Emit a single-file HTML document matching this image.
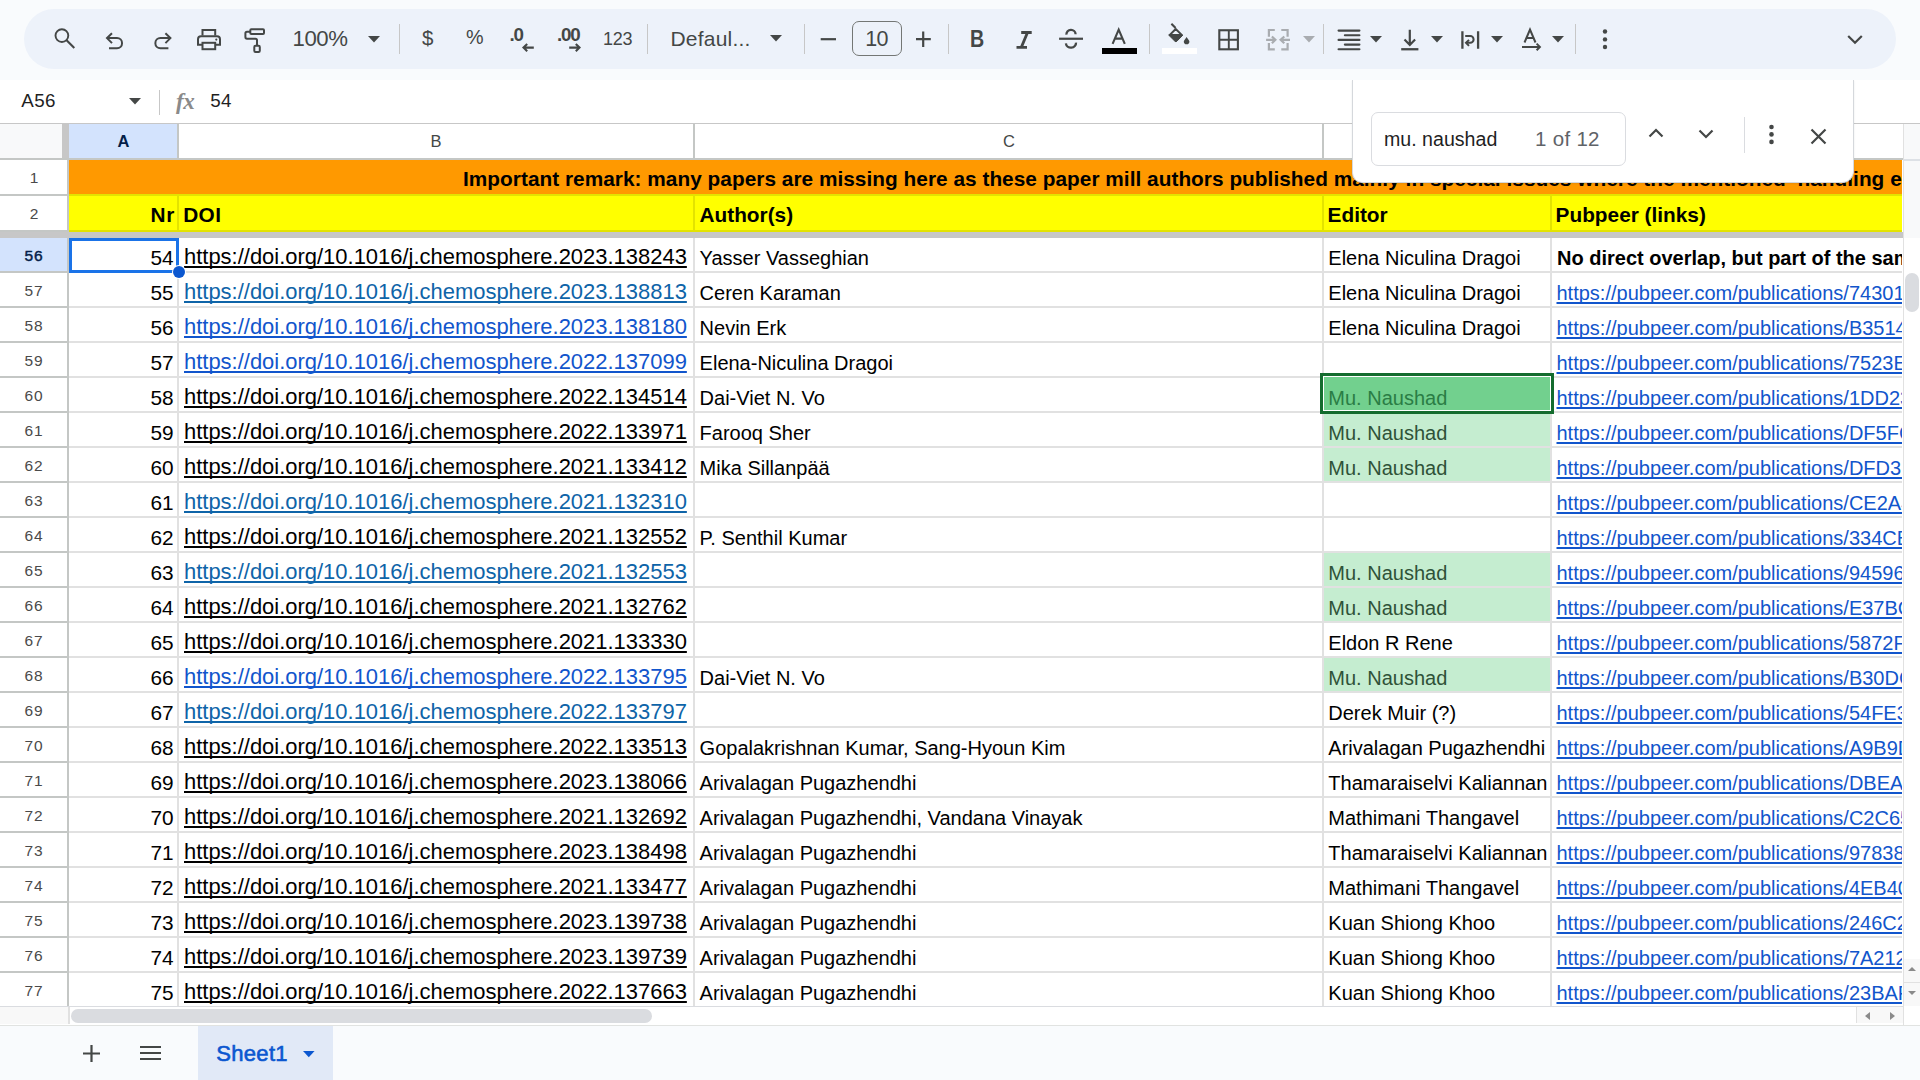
<!DOCTYPE html>
<html><head><meta charset="utf-8"><title>Sheet1 - Google Sheets</title>
<style>
html,body{margin:0;padding:0;}
body{width:1920px;height:1080px;overflow:hidden;position:relative;background:#f9fbfd;font-family:"Liberation Sans", sans-serif;}
.t{position:absolute;white-space:nowrap;}
.r{position:absolute;}
.clip{position:absolute;overflow:hidden;}
.ic{position:absolute;overflow:visible;}
.u{text-decoration:underline;text-decoration-thickness:2px;text-underline-offset:1.5px;text-decoration-skip-ink:none;}
</style></head><body>

<div class="r" style="left:24px;top:9px;width:1872px;height:60px;background:#edf2fa;border-radius:30px;"></div>
<svg class="ic" style="left:0;top:0" width="1920" height="80" viewBox="0 0 1920 80"><circle cx="61.9" cy="35.6" r="6.4" fill="none" stroke="#444746" stroke-width="1.9"/><path d="M66.6 40.3 L74.3 48" fill="none" stroke="#444746" stroke-width="2.1"/><path d="M112 33.2 L107 38.1 L112 43.1" fill="none" stroke="#444746" stroke-width="2"/><path d="M107.2 38.1 H117 A5.05 5.05 0 0 1 117 48.2 H109" fill="none" stroke="#444746" stroke-width="2"/><path d="M165.4 33.2 L170.4 38.1 L165.4 43.1" fill="none" stroke="#444746" stroke-width="2"/><path d="M170.2 38.1 H160.4 A5.05 5.05 0 0 0 160.4 48.2 H168.4" fill="none" stroke="#444746" stroke-width="2"/><path d="M202.5 35.4 V30.1 H215.2 V35.4" fill="none" stroke="#444746" stroke-width="2"/><path d="M202.5 44.8 H198 V39.2 A3 3 0 0 1 201 36.2 H217 A3 3 0 0 1 220 39.2 V44.8 H215.2" fill="none" stroke="#444746" stroke-width="2"/><rect x="202.5" y="42.8" width="12.7" height="6.4" fill="none" stroke="#444746" stroke-width="2"/><circle cx="216.3" cy="39.6" r="1.1" fill="#444746"/><rect x="250.3" y="29.2" width="13.7" height="4.9" rx="1" fill="none" stroke="#444746" stroke-width="2"/><path d="M250.3 31.7 H247 A1.6 1.6 0 0 0 245.4 33.3 V37.1 A1.6 1.6 0 0 0 247 38.7 H255.5 A1.5 1.5 0 0 1 257 40.2 V45" fill="none" stroke="#444746" stroke-width="2"/><rect x="254.3" y="45.8" width="5.5" height="6.2" rx="1.2" fill="none" stroke="#444746" stroke-width="2"/><path d="M533.8 47.6 H523.5 M527.2 44 L523.5 47.6 L527.2 51.2" fill="none" stroke="#444746" stroke-width="2.1"/><path d="M569.2 47.6 H579.5 M575.8 44 L579.5 47.6 L575.8 51.2" fill="none" stroke="#444746" stroke-width="2.1"/><path d="M820.7 39.2 H836" fill="none" stroke="#444746" stroke-width="2.2"/><path d="M916 39.2 H930.8 M923.2 31.4 V47" fill="none" stroke="#444746" stroke-width="2.2"/><path d="M1021.2 32.5 H1031.7 M1016.5 47.4 H1027 M1027.5 32.5 L1021.3 47.4" fill="none" stroke="#444746" stroke-width="2.8"/><path d="M1059.1 38.75 H1083" fill="none" stroke="#444746" stroke-width="2.2"/><path d="M1066.4 34.6 A4.6 4.6 0 0 1 1075.6 34.2" fill="none" stroke="#444746" stroke-width="2.3"/><path d="M1065.9 43.4 A5 4.6 0 0 0 1076 42.6" fill="none" stroke="#444746" stroke-width="2.3"/><path d="M1112.6 43.8 L1118.7 29.6 L1124.8 43.8 M1114.8 38.6 H1122.6" fill="none" stroke="#444746" stroke-width="2.1"/><path d="M1171.4 23.8 L1175.6 28" fill="none" stroke="#444746" stroke-width="2.1"/><path d="M1169.8 34.9 L1175.7 29 L1181.7 34.9 Z" fill="none" stroke="#444746" stroke-width="2" stroke-linejoin="round"/><path d="M1168.7 35.1 H1182.9 L1176.9 41.2 A1.4 1.4 0 0 1 1174.9 41.2 Z" fill="#444746" stroke="#444746" stroke-width="1" stroke-linejoin="round"/><path d="M1186.6 37 C1188 39 1189.4 40.6 1189.4 41.4 A2.8 2.8 0 0 1 1183.8 41.4 C1183.8 40.6 1185.2 39 1186.6 37 Z" fill="#444746"/><rect x="1219.3" y="30.25" width="18.6" height="19.05" fill="none" stroke="#444746" stroke-width="2.1"/><path d="M1228.8 30.25 V49.3 M1219.3 39.8 H1237.9" fill="none" stroke="#444746" stroke-width="1.9"/><path d="M1274.8 30 H1268.9 V36.7 M1268.9 43.1 V49.3 H1274.8 M1281.3 30 H1287.6 V36.7 M1287.6 43.1 V49.3 H1281.3" fill="none" stroke="#a9acb0" stroke-width="2.2"/><path d="M1266.1 39.8 H1275 M1271.9 36.5 L1275.4 39.8 L1271.9 43.3 M1290 39.8 H1281 M1284.3 36.5 L1280.6 39.8 L1284.3 43.3" fill="none" stroke="#a9acb0" stroke-width="2.2"/><path d="M1338.6 30.6 H1359.4 M1344.9 35.25 H1359.4 M1338.6 39.9 H1359.4 M1344.9 44.6 H1359.4 M1338.6 49.25 H1359.4" fill="none" stroke="#444746" stroke-width="2.2" stroke-linecap="round"/><path d="M1409.8 29.8 V44.5 M1404.5 39.6 L1409.8 45 L1415.1 39.6" fill="none" stroke="#444746" stroke-width="2.2"/><path d="M1401.2 49.25 H1418.4" fill="none" stroke="#444746" stroke-width="2.3"/><path d="M1462.4 31.2 V48.8 M1478.1 31.2 V48.8" fill="none" stroke="#444746" stroke-width="2.3"/><path d="M1465.2 36 H1470.2 A3.4 3.4 0 0 1 1470.2 42.8 H1466.2" fill="none" stroke="#444746" stroke-width="2"/><path d="M1469 39.9 L1466 42.8 L1469 45.9" fill="none" stroke="#444746" stroke-width="2"/><path d="M1524.5 42.5 L1530 29.6 L1535.5 42.5 M1526.3 38.1 H1533.7" fill="none" stroke="#444746" stroke-width="2"/><path d="M1522 46.9 H1539.6 M1536.6 43.6 L1539.9 46.9 L1536.6 50.2" fill="none" stroke="#444746" stroke-width="2"/><circle cx="1605" cy="31.5" r="2.2" fill="#444746"/><circle cx="1605" cy="39.4" r="2.2" fill="#444746"/><circle cx="1605" cy="47" r="2.2" fill="#444746"/><path d="M1848.2 36 L1855 42.8 L1861.8 36" fill="none" stroke="#444746" stroke-width="2.2"/></svg>
<div class="t" style="left:292.5px;top:28.41px;font-size:22.2px;line-height:22.2px;color:#444746;font-weight:normal;letter-spacing:-0.45px;">100%</div>
<svg class="ic" style="left:368.0px;top:35.75px" width="12" height="6.5" viewBox="0 0 12 6.5"><path d="M0 0 H12 L6.0 6.5 Z" fill="#444746"/></svg>
<div class="r" style="left:399px;top:24px;width:1px;height:30px;background:#c7c7c7;"></div>
<div class="t" style="left:422px;top:27.85px;font-size:20.5px;line-height:20.5px;color:#444746;font-weight:normal;">$</div>
<div class="t" style="left:466px;top:28.24px;font-size:19.8px;line-height:19.8px;color:#444746;font-weight:normal;">%</div>
<div class="t" style="left:509.5px;top:25.69px;font-size:18.8px;line-height:18.8px;color:#444746;font-weight:bold;letter-spacing:-1.2px;">.0</div>
<div class="t" style="left:557px;top:25.69px;font-size:18.8px;line-height:18.8px;color:#444746;font-weight:bold;letter-spacing:-1.2px;">.00</div>
<div class="t" style="left:603px;top:30.06px;font-size:18px;line-height:18px;color:#444746;font-weight:normal;letter-spacing:-0.3px;">123</div>
<div class="r" style="left:647px;top:24px;width:1px;height:30px;background:#c7c7c7;"></div>
<div class="t" style="left:670.5px;top:28.22px;font-size:21px;line-height:21px;color:#444746;font-weight:normal;letter-spacing:0.2px;">Defaul...</div>
<svg class="ic" style="left:770.0px;top:34.75px" width="12" height="6.5" viewBox="0 0 12 6.5"><path d="M0 0 H12 L6.0 6.5 Z" fill="#444746"/></svg>
<div class="r" style="left:804px;top:24px;width:1px;height:30px;background:#c7c7c7;"></div>
<div class="r" style="left:852px;top:21px;width:50px;height:34.5px;background:transparent;box-sizing:border-box;border:1px solid #747775;border-radius:7px;"></div>
<div class="t" style="left:576.6px;width:600px;text-align:center;top:28.70px;font-size:21.5px;line-height:21.5px;color:#444746;font-weight:normal;letter-spacing:-0.5px;">10</div>
<div class="r" style="left:948px;top:24px;width:1px;height:30px;background:#c7c7c7;"></div>
<div class="t" style="left:970px;top:28.49px;font-size:23.4px;line-height:23.4px;color:#444746;font-weight:bold;transform:scaleX(0.84);transform-origin:0 0;">B</div>
<div class="r" style="left:1102px;top:48px;width:35px;height:5.8px;background:#000000;"></div>
<div class="r" style="left:1149px;top:24px;width:1px;height:30px;background:#c7c7c7;"></div>
<div class="r" style="left:1162px;top:48px;width:35px;height:6px;background:#ffffff;"></div>
<svg class="ic" style="left:1303.0px;top:35.75px" width="12" height="6.5" viewBox="0 0 12 6.5"><path d="M0 0 H12 L6.0 6.5 Z" fill="#a9acb0"/></svg>
<div class="r" style="left:1323px;top:24px;width:1px;height:30px;background:#c7c7c7;"></div>
<svg class="ic" style="left:1370.0px;top:35.75px" width="12" height="6.5" viewBox="0 0 12 6.5"><path d="M0 0 H12 L6.0 6.5 Z" fill="#444746"/></svg>
<svg class="ic" style="left:1431.0px;top:35.75px" width="12" height="6.5" viewBox="0 0 12 6.5"><path d="M0 0 H12 L6.0 6.5 Z" fill="#444746"/></svg>
<svg class="ic" style="left:1491.0px;top:35.75px" width="12" height="6.5" viewBox="0 0 12 6.5"><path d="M0 0 H12 L6.0 6.5 Z" fill="#444746"/></svg>
<svg class="ic" style="left:1552.0px;top:35.75px" width="12" height="6.5" viewBox="0 0 12 6.5"><path d="M0 0 H12 L6.0 6.5 Z" fill="#444746"/></svg>
<div class="r" style="left:1575px;top:24px;width:1px;height:30px;background:#c7c7c7;"></div>
<div class="r" style="left:0px;top:80px;width:1920px;height:43px;background:#ffffff;"></div>
<div class="r" style="left:0px;top:123px;width:1920px;height:1px;background:#c7c7c7;"></div>
<div class="t" style="left:21.3px;top:92.49px;font-size:18.8px;line-height:18.8px;color:#1f1f1f;font-weight:normal;letter-spacing:0.35px;">A56</div>
<svg class="ic" style="left:129.0px;top:98.25px" width="12" height="6.5" viewBox="0 0 12 6.5"><path d="M0 0 H12 L6.0 6.5 Z" fill="#444746"/></svg>
<div class="r" style="left:159px;top:90px;width:1px;height:25px;background:#c7c7c7;"></div>
<div class="t" style="left:176px;top:90.03px;font-size:23px;line-height:23px;color:#8a8a8a;font-weight:bold;font-family:'Liberation Serif',serif;letter-spacing:-0.5px;"><i>fx</i></div>
<div class="t" style="left:210.3px;top:92.29px;font-size:18.8px;line-height:18.8px;color:#1f1f1f;font-weight:normal;letter-spacing:0.3px;">54</div>
<div class="r" style="left:0px;top:124px;width:1903px;height:34px;background:#ffffff;"></div>
<div class="r" style="left:0px;top:124px;width:62px;height:34px;background:#f8f9fa;"></div>
<div class="r" style="left:69px;top:124px;width:108px;height:34px;background:#d3e3fd;"></div>
<div class="r" style="left:62px;top:124px;width:7px;height:36px;background:#c7c7c7;"></div>
<div class="r" style="left:0px;top:158px;width:1903px;height:2px;background:#c4c7c5;"></div>
<div class="r" style="left:177px;top:124px;width:2px;height:34px;background:#c4c7c5;"></div>
<div class="r" style="left:693px;top:124px;width:2px;height:34px;background:#c4c7c5;"></div>
<div class="r" style="left:1322px;top:124px;width:2px;height:34px;background:#c4c7c5;"></div>
<div class="r" style="left:1550px;top:124px;width:2px;height:34px;background:#c4c7c5;"></div>
<div class="t" style="left:-176.5px;width:600px;text-align:center;top:133.23px;font-size:16.5px;line-height:16.5px;color:#041e49;font-weight:normal;"><b>A</b></div>
<div class="t" style="left:136px;width:600px;text-align:center;top:133.23px;font-size:16.5px;line-height:16.5px;color:#444746;font-weight:normal;">B</div>
<div class="t" style="left:709px;width:600px;text-align:center;top:133.23px;font-size:16.5px;line-height:16.5px;color:#444746;font-weight:normal;">C</div>
<div class="t" style="left:1137px;width:600px;text-align:center;top:133.23px;font-size:16.5px;line-height:16.5px;color:#444746;font-weight:normal;">D</div>
<div class="r" style="left:0px;top:160px;width:1903px;height:848px;background:#ffffff;"></div>
<div class="r" style="left:67px;top:160px;width:2px;height:848px;background:#c4c7c5;"></div>
<div class="r" style="left:69px;top:160px;width:1833px;height:34px;background:#ff9900;"></div>
<div class="r" style="left:69px;top:194px;width:1833px;height:2px;background:#e3e300;"></div>
<div class="r" style="left:0px;top:194px;width:67px;height:2px;background:#c4c7c5;"></div>
<div class="r" style="left:69px;top:196px;width:1833px;height:34px;background:#ffff00;"></div>
<div class="r" style="left:69px;top:230px;width:1833px;height:2px;background:#e3e300;"></div>
<div class="r" style="left:177px;top:196px;width:2px;height:34px;background:#e3e300;"></div>
<div class="r" style="left:693px;top:196px;width:2px;height:34px;background:#e3e300;"></div>
<div class="r" style="left:1322px;top:196px;width:2px;height:34px;background:#e3e300;"></div>
<div class="r" style="left:1550px;top:196px;width:2px;height:34px;background:#e3e300;"></div>
<div class="r" style="left:0px;top:232px;width:1903px;height:6px;background:#c7c7c7;"></div>
<div class="r" style="left:0px;top:230px;width:67px;height:2px;background:#c4c7c5;"></div>
<div class="t" style="left:-266px;width:600px;text-align:center;top:170.18px;font-size:15.5px;line-height:15.5px;color:#4a4a4a;font-weight:normal;">1</div>
<div class="t" style="left:-266px;width:600px;text-align:center;top:206.08px;font-size:15.5px;line-height:15.5px;color:#4a4a4a;font-weight:normal;">2</div>
<div class="clip" style="left:69px;top:160px;width:1833px;height:34px;">
<div class="t" style="left:394px;top:8.69px;font-size:20.8px;line-height:20.8px;font-weight:bold;color:#000;letter-spacing:0.032px;">Important remark: many papers are missing here as these paper mill authors published mainly in special issues where the mentioned ‘handling editor’ was not listed</div>
</div>
<div class="t" style="right:1744.8px;top:205.39px;font-size:20.8px;line-height:20.8px;color:#000;font-weight:bold;letter-spacing:0.8px;">Nr</div>
<div class="t" style="left:183.2px;top:205.39px;font-size:20.8px;line-height:20.8px;color:#000;font-weight:bold;letter-spacing:0.4px;">DOI</div>
<div class="t" style="left:699.5px;top:205.39px;font-size:20.8px;line-height:20.8px;color:#000;font-weight:bold;">Author(s)</div>
<div class="t" style="left:1327.6px;top:205.39px;font-size:20.8px;line-height:20.8px;color:#000;font-weight:bold;">Editor</div>
<div class="t" style="left:1555.6px;top:205.39px;font-size:20.8px;line-height:20.8px;color:#000;font-weight:bold;">Pubpeer (links)</div>
<div class="r" style="left:0px;top:238px;width:67px;height:33px;background:#d3e3fd;"></div>
<div class="t" style="left:-266px;width:600px;text-align:center;top:247.98px;font-size:15.5px;line-height:15.5px;color:#041e49;font-weight:normal;letter-spacing:0.8px;-webkit-text-stroke:0.45px #041e49;">56</div>
<div class="r" style="left:0px;top:271px;width:67px;height:2px;background:#c4c7c5;"></div>
<div class="r" style="left:69px;top:271px;width:1833px;height:2px;background:#e1e1e1;"></div>
<div class="r" style="left:177px;top:238px;width:2px;height:35px;background:#e1e1e1;"></div>
<div class="r" style="left:693px;top:238px;width:2px;height:35px;background:#e1e1e1;"></div>
<div class="r" style="left:1322px;top:238px;width:2px;height:35px;background:#e1e1e1;"></div>
<div class="r" style="left:1550px;top:238px;width:2px;height:35px;background:#e1e1e1;"></div>
<div class="t" style="right:1746.4px;top:247.59px;font-size:20.8px;line-height:20.8px;color:#000;font-weight:normal;">54</div>
<div class="t" style="left:184px;top:246.31px;font-size:21.96px;line-height:21.96px;color:#000000;font-weight:normal;"><span class="u">https://doi.org/10.1016/j.chemosphere.2023.138243</span></div>
<div class="t" style="left:699.6px;top:248.07px;font-size:20px;line-height:20px;color:#000;font-weight:normal;">Yasser Vasseghian</div>
<div class="t" style="left:1328.3px;top:248.07px;font-size:20px;line-height:20px;color:#000;font-weight:normal;">Elena Niculina Dragoi</div>
<div class="clip" style="left:1552px;top:238px;width:350px;height:33px;">
<div class="t" style="left:5px;top:10.07px;font-size:20px;line-height:20px;font-weight:bold;color:#000;">No direct overlap, but part of the same</div>
</div>
<div class="t" style="left:-266px;width:600px;text-align:center;top:282.98px;font-size:15.5px;line-height:15.5px;color:#4a4a4a;font-weight:normal;letter-spacing:0.8px;">57</div>
<div class="r" style="left:0px;top:306px;width:67px;height:2px;background:#c4c7c5;"></div>
<div class="r" style="left:69px;top:306px;width:1833px;height:2px;background:#e1e1e1;"></div>
<div class="r" style="left:177px;top:273px;width:2px;height:35px;background:#e1e1e1;"></div>
<div class="r" style="left:693px;top:273px;width:2px;height:35px;background:#e1e1e1;"></div>
<div class="r" style="left:1322px;top:273px;width:2px;height:35px;background:#e1e1e1;"></div>
<div class="r" style="left:1550px;top:273px;width:2px;height:35px;background:#e1e1e1;"></div>
<div class="t" style="right:1746.4px;top:282.59px;font-size:20.8px;line-height:20.8px;color:#000;font-weight:normal;">55</div>
<div class="t" style="left:184px;top:281.31px;font-size:21.96px;line-height:21.96px;color:#0e64a8;font-weight:normal;"><span class="u">https://doi.org/10.1016/j.chemosphere.2023.138813</span></div>
<div class="t" style="left:699.6px;top:283.07px;font-size:20px;line-height:20px;color:#000;font-weight:normal;">Ceren Karaman</div>
<div class="t" style="left:1328.3px;top:283.07px;font-size:20px;line-height:20px;color:#000;font-weight:normal;">Elena Niculina Dragoi</div>
<div class="clip" style="left:1552px;top:273px;width:350px;height:33px;">
<div class="t" style="left:4.5px;top:10.07px;font-size:20px;line-height:20px;color:#1155cc;"><span class="u">https://pubpeer.com/publications/743016</span></div>
</div>
<div class="t" style="left:-266px;width:600px;text-align:center;top:317.98px;font-size:15.5px;line-height:15.5px;color:#4a4a4a;font-weight:normal;letter-spacing:0.8px;">58</div>
<div class="r" style="left:0px;top:341px;width:67px;height:2px;background:#c4c7c5;"></div>
<div class="r" style="left:69px;top:341px;width:1833px;height:2px;background:#e1e1e1;"></div>
<div class="r" style="left:177px;top:308px;width:2px;height:35px;background:#e1e1e1;"></div>
<div class="r" style="left:693px;top:308px;width:2px;height:35px;background:#e1e1e1;"></div>
<div class="r" style="left:1322px;top:308px;width:2px;height:35px;background:#e1e1e1;"></div>
<div class="r" style="left:1550px;top:308px;width:2px;height:35px;background:#e1e1e1;"></div>
<div class="t" style="right:1746.4px;top:317.59px;font-size:20.8px;line-height:20.8px;color:#000;font-weight:normal;">56</div>
<div class="t" style="left:184px;top:316.31px;font-size:21.96px;line-height:21.96px;color:#1155cc;font-weight:normal;"><span class="u">https://doi.org/10.1016/j.chemosphere.2023.138180</span></div>
<div class="t" style="left:699.6px;top:318.07px;font-size:20px;line-height:20px;color:#000;font-weight:normal;">Nevin Erk</div>
<div class="t" style="left:1328.3px;top:318.07px;font-size:20px;line-height:20px;color:#000;font-weight:normal;">Elena Niculina Dragoi</div>
<div class="clip" style="left:1552px;top:308px;width:350px;height:33px;">
<div class="t" style="left:4.5px;top:10.07px;font-size:20px;line-height:20px;color:#1155cc;"><span class="u">https://pubpeer.com/publications/B35140</span></div>
</div>
<div class="t" style="left:-266px;width:600px;text-align:center;top:352.98px;font-size:15.5px;line-height:15.5px;color:#4a4a4a;font-weight:normal;letter-spacing:0.8px;">59</div>
<div class="r" style="left:0px;top:376px;width:67px;height:2px;background:#c4c7c5;"></div>
<div class="r" style="left:69px;top:376px;width:1833px;height:2px;background:#e1e1e1;"></div>
<div class="r" style="left:177px;top:343px;width:2px;height:35px;background:#e1e1e1;"></div>
<div class="r" style="left:693px;top:343px;width:2px;height:35px;background:#e1e1e1;"></div>
<div class="r" style="left:1322px;top:343px;width:2px;height:35px;background:#e1e1e1;"></div>
<div class="r" style="left:1550px;top:343px;width:2px;height:35px;background:#e1e1e1;"></div>
<div class="t" style="right:1746.4px;top:352.59px;font-size:20.8px;line-height:20.8px;color:#000;font-weight:normal;">57</div>
<div class="t" style="left:184px;top:351.31px;font-size:21.96px;line-height:21.96px;color:#1155cc;font-weight:normal;"><span class="u">https://doi.org/10.1016/j.chemosphere.2022.137099</span></div>
<div class="t" style="left:699.6px;top:353.07px;font-size:20px;line-height:20px;color:#000;font-weight:normal;">Elena-Niculina Dragoi</div>
<div class="clip" style="left:1552px;top:343px;width:350px;height:33px;">
<div class="t" style="left:4.5px;top:10.07px;font-size:20px;line-height:20px;color:#1155cc;"><span class="u">https://pubpeer.com/publications/7523EB</span></div>
</div>
<div class="t" style="left:-266px;width:600px;text-align:center;top:387.98px;font-size:15.5px;line-height:15.5px;color:#4a4a4a;font-weight:normal;letter-spacing:0.8px;">60</div>
<div class="r" style="left:0px;top:411px;width:67px;height:2px;background:#c4c7c5;"></div>
<div class="r" style="left:1324px;top:377px;width:226px;height:33px;background:#72d08e;"></div>
<div class="r" style="left:69px;top:411px;width:1833px;height:2px;background:#e1e1e1;"></div>
<div class="r" style="left:177px;top:378px;width:2px;height:35px;background:#e1e1e1;"></div>
<div class="r" style="left:693px;top:378px;width:2px;height:35px;background:#e1e1e1;"></div>
<div class="r" style="left:1322px;top:378px;width:2px;height:35px;background:#e1e1e1;"></div>
<div class="r" style="left:1550px;top:378px;width:2px;height:35px;background:#e1e1e1;"></div>
<div class="t" style="right:1746.4px;top:387.59px;font-size:20.8px;line-height:20.8px;color:#000;font-weight:normal;">58</div>
<div class="t" style="left:184px;top:386.31px;font-size:21.96px;line-height:21.96px;color:#000000;font-weight:normal;"><span class="u">https://doi.org/10.1016/j.chemosphere.2022.134514</span></div>
<div class="t" style="left:699.6px;top:388.07px;font-size:20px;line-height:20px;color:#000;font-weight:normal;">Dai-Viet N. Vo</div>
<div class="t" style="left:1328.3px;top:388.07px;font-size:20px;line-height:20px;color:#2a7d45;font-weight:normal;">Mu. Naushad</div>
<div class="clip" style="left:1552px;top:378px;width:350px;height:33px;">
<div class="t" style="left:4.5px;top:10.07px;font-size:20px;line-height:20px;color:#1155cc;"><span class="u">https://pubpeer.com/publications/1DD238</span></div>
</div>
<div class="t" style="left:-266px;width:600px;text-align:center;top:422.98px;font-size:15.5px;line-height:15.5px;color:#4a4a4a;font-weight:normal;letter-spacing:0.8px;">61</div>
<div class="r" style="left:0px;top:446px;width:67px;height:2px;background:#c4c7c5;"></div>
<div class="r" style="left:1324px;top:413px;width:226px;height:33px;background:#c5edd0;"></div>
<div class="r" style="left:69px;top:446px;width:1833px;height:2px;background:#e1e1e1;"></div>
<div class="r" style="left:177px;top:413px;width:2px;height:35px;background:#e1e1e1;"></div>
<div class="r" style="left:693px;top:413px;width:2px;height:35px;background:#e1e1e1;"></div>
<div class="r" style="left:1322px;top:413px;width:2px;height:35px;background:#e1e1e1;"></div>
<div class="r" style="left:1550px;top:413px;width:2px;height:35px;background:#e1e1e1;"></div>
<div class="t" style="right:1746.4px;top:422.59px;font-size:20.8px;line-height:20.8px;color:#000;font-weight:normal;">59</div>
<div class="t" style="left:184px;top:421.31px;font-size:21.96px;line-height:21.96px;color:#000000;font-weight:normal;"><span class="u">https://doi.org/10.1016/j.chemosphere.2022.133971</span></div>
<div class="t" style="left:699.6px;top:423.07px;font-size:20px;line-height:20px;color:#000;font-weight:normal;">Farooq Sher</div>
<div class="t" style="left:1328.3px;top:423.07px;font-size:20px;line-height:20px;color:#2f5238;font-weight:normal;">Mu. Naushad</div>
<div class="clip" style="left:1552px;top:413px;width:350px;height:33px;">
<div class="t" style="left:4.5px;top:10.07px;font-size:20px;line-height:20px;color:#1155cc;"><span class="u">https://pubpeer.com/publications/DF5FC0</span></div>
</div>
<div class="t" style="left:-266px;width:600px;text-align:center;top:457.98px;font-size:15.5px;line-height:15.5px;color:#4a4a4a;font-weight:normal;letter-spacing:0.8px;">62</div>
<div class="r" style="left:0px;top:481px;width:67px;height:2px;background:#c4c7c5;"></div>
<div class="r" style="left:1324px;top:448px;width:226px;height:33px;background:#c5edd0;"></div>
<div class="r" style="left:69px;top:481px;width:1833px;height:2px;background:#e1e1e1;"></div>
<div class="r" style="left:177px;top:448px;width:2px;height:35px;background:#e1e1e1;"></div>
<div class="r" style="left:693px;top:448px;width:2px;height:35px;background:#e1e1e1;"></div>
<div class="r" style="left:1322px;top:448px;width:2px;height:35px;background:#e1e1e1;"></div>
<div class="r" style="left:1550px;top:448px;width:2px;height:35px;background:#e1e1e1;"></div>
<div class="t" style="right:1746.4px;top:457.59px;font-size:20.8px;line-height:20.8px;color:#000;font-weight:normal;">60</div>
<div class="t" style="left:184px;top:456.31px;font-size:21.96px;line-height:21.96px;color:#000000;font-weight:normal;"><span class="u">https://doi.org/10.1016/j.chemosphere.2021.133412</span></div>
<div class="t" style="left:699.6px;top:458.07px;font-size:20px;line-height:20px;color:#000;font-weight:normal;">Mika Sillanpää</div>
<div class="t" style="left:1328.3px;top:458.07px;font-size:20px;line-height:20px;color:#2f5238;font-weight:normal;">Mu. Naushad</div>
<div class="clip" style="left:1552px;top:448px;width:350px;height:33px;">
<div class="t" style="left:4.5px;top:10.07px;font-size:20px;line-height:20px;color:#1155cc;"><span class="u">https://pubpeer.com/publications/DFD312</span></div>
</div>
<div class="t" style="left:-266px;width:600px;text-align:center;top:492.98px;font-size:15.5px;line-height:15.5px;color:#4a4a4a;font-weight:normal;letter-spacing:0.8px;">63</div>
<div class="r" style="left:0px;top:516px;width:67px;height:2px;background:#c4c7c5;"></div>
<div class="r" style="left:69px;top:516px;width:1833px;height:2px;background:#e1e1e1;"></div>
<div class="r" style="left:177px;top:483px;width:2px;height:35px;background:#e1e1e1;"></div>
<div class="r" style="left:693px;top:483px;width:2px;height:35px;background:#e1e1e1;"></div>
<div class="r" style="left:1322px;top:483px;width:2px;height:35px;background:#e1e1e1;"></div>
<div class="r" style="left:1550px;top:483px;width:2px;height:35px;background:#e1e1e1;"></div>
<div class="t" style="right:1746.4px;top:492.59px;font-size:20.8px;line-height:20.8px;color:#000;font-weight:normal;">61</div>
<div class="t" style="left:184px;top:491.31px;font-size:21.96px;line-height:21.96px;color:#0e64a8;font-weight:normal;"><span class="u">https://doi.org/10.1016/j.chemosphere.2021.132310</span></div>
<div class="clip" style="left:1552px;top:483px;width:350px;height:33px;">
<div class="t" style="left:4.5px;top:10.07px;font-size:20px;line-height:20px;color:#1155cc;"><span class="u">https://pubpeer.com/publications/CE2A4F</span></div>
</div>
<div class="t" style="left:-266px;width:600px;text-align:center;top:527.98px;font-size:15.5px;line-height:15.5px;color:#4a4a4a;font-weight:normal;letter-spacing:0.8px;">64</div>
<div class="r" style="left:0px;top:551px;width:67px;height:2px;background:#c4c7c5;"></div>
<div class="r" style="left:69px;top:551px;width:1833px;height:2px;background:#e1e1e1;"></div>
<div class="r" style="left:177px;top:518px;width:2px;height:35px;background:#e1e1e1;"></div>
<div class="r" style="left:693px;top:518px;width:2px;height:35px;background:#e1e1e1;"></div>
<div class="r" style="left:1322px;top:518px;width:2px;height:35px;background:#e1e1e1;"></div>
<div class="r" style="left:1550px;top:518px;width:2px;height:35px;background:#e1e1e1;"></div>
<div class="t" style="right:1746.4px;top:527.59px;font-size:20.8px;line-height:20.8px;color:#000;font-weight:normal;">62</div>
<div class="t" style="left:184px;top:526.31px;font-size:21.96px;line-height:21.96px;color:#000000;font-weight:normal;"><span class="u">https://doi.org/10.1016/j.chemosphere.2021.132552</span></div>
<div class="t" style="left:699.6px;top:528.07px;font-size:20px;line-height:20px;color:#000;font-weight:normal;">P. Senthil Kumar</div>
<div class="clip" style="left:1552px;top:518px;width:350px;height:33px;">
<div class="t" style="left:4.5px;top:10.07px;font-size:20px;line-height:20px;color:#1155cc;"><span class="u">https://pubpeer.com/publications/334CEB</span></div>
</div>
<div class="t" style="left:-266px;width:600px;text-align:center;top:562.98px;font-size:15.5px;line-height:15.5px;color:#4a4a4a;font-weight:normal;letter-spacing:0.8px;">65</div>
<div class="r" style="left:0px;top:586px;width:67px;height:2px;background:#c4c7c5;"></div>
<div class="r" style="left:1324px;top:553px;width:226px;height:33px;background:#c5edd0;"></div>
<div class="r" style="left:69px;top:586px;width:1833px;height:2px;background:#e1e1e1;"></div>
<div class="r" style="left:177px;top:553px;width:2px;height:35px;background:#e1e1e1;"></div>
<div class="r" style="left:693px;top:553px;width:2px;height:35px;background:#e1e1e1;"></div>
<div class="r" style="left:1322px;top:553px;width:2px;height:35px;background:#e1e1e1;"></div>
<div class="r" style="left:1550px;top:553px;width:2px;height:35px;background:#e1e1e1;"></div>
<div class="t" style="right:1746.4px;top:562.59px;font-size:20.8px;line-height:20.8px;color:#000;font-weight:normal;">63</div>
<div class="t" style="left:184px;top:561.31px;font-size:21.96px;line-height:21.96px;color:#0e64a8;font-weight:normal;"><span class="u">https://doi.org/10.1016/j.chemosphere.2021.132553</span></div>
<div class="t" style="left:1328.3px;top:563.07px;font-size:20px;line-height:20px;color:#2f5238;font-weight:normal;">Mu. Naushad</div>
<div class="clip" style="left:1552px;top:553px;width:350px;height:33px;">
<div class="t" style="left:4.5px;top:10.07px;font-size:20px;line-height:20px;color:#1155cc;"><span class="u">https://pubpeer.com/publications/945960</span></div>
</div>
<div class="t" style="left:-266px;width:600px;text-align:center;top:597.98px;font-size:15.5px;line-height:15.5px;color:#4a4a4a;font-weight:normal;letter-spacing:0.8px;">66</div>
<div class="r" style="left:0px;top:621px;width:67px;height:2px;background:#c4c7c5;"></div>
<div class="r" style="left:1324px;top:588px;width:226px;height:33px;background:#c5edd0;"></div>
<div class="r" style="left:69px;top:621px;width:1833px;height:2px;background:#e1e1e1;"></div>
<div class="r" style="left:177px;top:588px;width:2px;height:35px;background:#e1e1e1;"></div>
<div class="r" style="left:693px;top:588px;width:2px;height:35px;background:#e1e1e1;"></div>
<div class="r" style="left:1322px;top:588px;width:2px;height:35px;background:#e1e1e1;"></div>
<div class="r" style="left:1550px;top:588px;width:2px;height:35px;background:#e1e1e1;"></div>
<div class="t" style="right:1746.4px;top:597.59px;font-size:20.8px;line-height:20.8px;color:#000;font-weight:normal;">64</div>
<div class="t" style="left:184px;top:596.31px;font-size:21.96px;line-height:21.96px;color:#000000;font-weight:normal;"><span class="u">https://doi.org/10.1016/j.chemosphere.2021.132762</span></div>
<div class="t" style="left:1328.3px;top:598.07px;font-size:20px;line-height:20px;color:#2f5238;font-weight:normal;">Mu. Naushad</div>
<div class="clip" style="left:1552px;top:588px;width:350px;height:33px;">
<div class="t" style="left:4.5px;top:10.07px;font-size:20px;line-height:20px;color:#1155cc;"><span class="u">https://pubpeer.com/publications/E37BC0</span></div>
</div>
<div class="t" style="left:-266px;width:600px;text-align:center;top:632.98px;font-size:15.5px;line-height:15.5px;color:#4a4a4a;font-weight:normal;letter-spacing:0.8px;">67</div>
<div class="r" style="left:0px;top:656px;width:67px;height:2px;background:#c4c7c5;"></div>
<div class="r" style="left:69px;top:656px;width:1833px;height:2px;background:#e1e1e1;"></div>
<div class="r" style="left:177px;top:623px;width:2px;height:35px;background:#e1e1e1;"></div>
<div class="r" style="left:693px;top:623px;width:2px;height:35px;background:#e1e1e1;"></div>
<div class="r" style="left:1322px;top:623px;width:2px;height:35px;background:#e1e1e1;"></div>
<div class="r" style="left:1550px;top:623px;width:2px;height:35px;background:#e1e1e1;"></div>
<div class="t" style="right:1746.4px;top:632.59px;font-size:20.8px;line-height:20.8px;color:#000;font-weight:normal;">65</div>
<div class="t" style="left:184px;top:631.31px;font-size:21.96px;line-height:21.96px;color:#000000;font-weight:normal;"><span class="u">https://doi.org/10.1016/j.chemosphere.2021.133330</span></div>
<div class="t" style="left:1328.3px;top:633.07px;font-size:20px;line-height:20px;color:#000;font-weight:normal;">Eldon R Rene</div>
<div class="clip" style="left:1552px;top:623px;width:350px;height:33px;">
<div class="t" style="left:4.5px;top:10.07px;font-size:20px;line-height:20px;color:#1155cc;"><span class="u">https://pubpeer.com/publications/5872FA</span></div>
</div>
<div class="t" style="left:-266px;width:600px;text-align:center;top:667.98px;font-size:15.5px;line-height:15.5px;color:#4a4a4a;font-weight:normal;letter-spacing:0.8px;">68</div>
<div class="r" style="left:0px;top:691px;width:67px;height:2px;background:#c4c7c5;"></div>
<div class="r" style="left:1324px;top:658px;width:226px;height:33px;background:#c5edd0;"></div>
<div class="r" style="left:69px;top:691px;width:1833px;height:2px;background:#e1e1e1;"></div>
<div class="r" style="left:177px;top:658px;width:2px;height:35px;background:#e1e1e1;"></div>
<div class="r" style="left:693px;top:658px;width:2px;height:35px;background:#e1e1e1;"></div>
<div class="r" style="left:1322px;top:658px;width:2px;height:35px;background:#e1e1e1;"></div>
<div class="r" style="left:1550px;top:658px;width:2px;height:35px;background:#e1e1e1;"></div>
<div class="t" style="right:1746.4px;top:667.59px;font-size:20.8px;line-height:20.8px;color:#000;font-weight:normal;">66</div>
<div class="t" style="left:184px;top:666.31px;font-size:21.96px;line-height:21.96px;color:#1155cc;font-weight:normal;"><span class="u">https://doi.org/10.1016/j.chemosphere.2022.133795</span></div>
<div class="t" style="left:699.6px;top:668.07px;font-size:20px;line-height:20px;color:#000;font-weight:normal;">Dai-Viet N. Vo</div>
<div class="t" style="left:1328.3px;top:668.07px;font-size:20px;line-height:20px;color:#2f5238;font-weight:normal;">Mu. Naushad</div>
<div class="clip" style="left:1552px;top:658px;width:350px;height:33px;">
<div class="t" style="left:4.5px;top:10.07px;font-size:20px;line-height:20px;color:#1155cc;"><span class="u">https://pubpeer.com/publications/B30DC0</span></div>
</div>
<div class="t" style="left:-266px;width:600px;text-align:center;top:702.98px;font-size:15.5px;line-height:15.5px;color:#4a4a4a;font-weight:normal;letter-spacing:0.8px;">69</div>
<div class="r" style="left:0px;top:726px;width:67px;height:2px;background:#c4c7c5;"></div>
<div class="r" style="left:69px;top:726px;width:1833px;height:2px;background:#e1e1e1;"></div>
<div class="r" style="left:177px;top:693px;width:2px;height:35px;background:#e1e1e1;"></div>
<div class="r" style="left:693px;top:693px;width:2px;height:35px;background:#e1e1e1;"></div>
<div class="r" style="left:1322px;top:693px;width:2px;height:35px;background:#e1e1e1;"></div>
<div class="r" style="left:1550px;top:693px;width:2px;height:35px;background:#e1e1e1;"></div>
<div class="t" style="right:1746.4px;top:702.59px;font-size:20.8px;line-height:20.8px;color:#000;font-weight:normal;">67</div>
<div class="t" style="left:184px;top:701.31px;font-size:21.96px;line-height:21.96px;color:#0e64a8;font-weight:normal;"><span class="u">https://doi.org/10.1016/j.chemosphere.2022.133797</span></div>
<div class="t" style="left:1328.3px;top:703.07px;font-size:20px;line-height:20px;color:#000;font-weight:normal;">Derek Muir (?)</div>
<div class="clip" style="left:1552px;top:693px;width:350px;height:33px;">
<div class="t" style="left:4.5px;top:10.07px;font-size:20px;line-height:20px;color:#1155cc;"><span class="u">https://pubpeer.com/publications/54FE32</span></div>
</div>
<div class="t" style="left:-266px;width:600px;text-align:center;top:737.98px;font-size:15.5px;line-height:15.5px;color:#4a4a4a;font-weight:normal;letter-spacing:0.8px;">70</div>
<div class="r" style="left:0px;top:761px;width:67px;height:2px;background:#c4c7c5;"></div>
<div class="r" style="left:69px;top:761px;width:1833px;height:2px;background:#e1e1e1;"></div>
<div class="r" style="left:177px;top:728px;width:2px;height:35px;background:#e1e1e1;"></div>
<div class="r" style="left:693px;top:728px;width:2px;height:35px;background:#e1e1e1;"></div>
<div class="r" style="left:1322px;top:728px;width:2px;height:35px;background:#e1e1e1;"></div>
<div class="r" style="left:1550px;top:728px;width:2px;height:35px;background:#e1e1e1;"></div>
<div class="t" style="right:1746.4px;top:737.59px;font-size:20.8px;line-height:20.8px;color:#000;font-weight:normal;">68</div>
<div class="t" style="left:184px;top:736.31px;font-size:21.96px;line-height:21.96px;color:#000000;font-weight:normal;"><span class="u">https://doi.org/10.1016/j.chemosphere.2022.133513</span></div>
<div class="t" style="left:699.6px;top:738.07px;font-size:20px;line-height:20px;color:#000;font-weight:normal;">Gopalakrishnan Kumar, Sang-Hyoun Kim</div>
<div class="t" style="left:1328.3px;top:738.07px;font-size:20px;line-height:20px;color:#000;font-weight:normal;">Arivalagan Pugazhendhi</div>
<div class="clip" style="left:1552px;top:728px;width:350px;height:33px;">
<div class="t" style="left:4.5px;top:10.07px;font-size:20px;line-height:20px;color:#1155cc;"><span class="u">https://pubpeer.com/publications/A9B9DF</span></div>
</div>
<div class="t" style="left:-266px;width:600px;text-align:center;top:772.98px;font-size:15.5px;line-height:15.5px;color:#4a4a4a;font-weight:normal;letter-spacing:0.8px;">71</div>
<div class="r" style="left:0px;top:796px;width:67px;height:2px;background:#c4c7c5;"></div>
<div class="r" style="left:69px;top:796px;width:1833px;height:2px;background:#e1e1e1;"></div>
<div class="r" style="left:177px;top:763px;width:2px;height:35px;background:#e1e1e1;"></div>
<div class="r" style="left:693px;top:763px;width:2px;height:35px;background:#e1e1e1;"></div>
<div class="r" style="left:1322px;top:763px;width:2px;height:35px;background:#e1e1e1;"></div>
<div class="r" style="left:1550px;top:763px;width:2px;height:35px;background:#e1e1e1;"></div>
<div class="t" style="right:1746.4px;top:772.59px;font-size:20.8px;line-height:20.8px;color:#000;font-weight:normal;">69</div>
<div class="t" style="left:184px;top:771.31px;font-size:21.96px;line-height:21.96px;color:#000000;font-weight:normal;"><span class="u">https://doi.org/10.1016/j.chemosphere.2023.138066</span></div>
<div class="t" style="left:699.6px;top:773.07px;font-size:20px;line-height:20px;color:#000;font-weight:normal;">Arivalagan Pugazhendhi</div>
<div class="t" style="left:1328.3px;top:773.07px;font-size:20px;line-height:20px;color:#000;font-weight:normal;">Thamaraiselvi Kaliannan</div>
<div class="clip" style="left:1552px;top:763px;width:350px;height:33px;">
<div class="t" style="left:4.5px;top:10.07px;font-size:20px;line-height:20px;color:#1155cc;"><span class="u">https://pubpeer.com/publications/DBEA07</span></div>
</div>
<div class="t" style="left:-266px;width:600px;text-align:center;top:807.98px;font-size:15.5px;line-height:15.5px;color:#4a4a4a;font-weight:normal;letter-spacing:0.8px;">72</div>
<div class="r" style="left:0px;top:831px;width:67px;height:2px;background:#c4c7c5;"></div>
<div class="r" style="left:69px;top:831px;width:1833px;height:2px;background:#e1e1e1;"></div>
<div class="r" style="left:177px;top:798px;width:2px;height:35px;background:#e1e1e1;"></div>
<div class="r" style="left:693px;top:798px;width:2px;height:35px;background:#e1e1e1;"></div>
<div class="r" style="left:1322px;top:798px;width:2px;height:35px;background:#e1e1e1;"></div>
<div class="r" style="left:1550px;top:798px;width:2px;height:35px;background:#e1e1e1;"></div>
<div class="t" style="right:1746.4px;top:807.59px;font-size:20.8px;line-height:20.8px;color:#000;font-weight:normal;">70</div>
<div class="t" style="left:184px;top:806.31px;font-size:21.96px;line-height:21.96px;color:#000000;font-weight:normal;"><span class="u">https://doi.org/10.1016/j.chemosphere.2021.132692</span></div>
<div class="t" style="left:699.6px;top:808.07px;font-size:20px;line-height:20px;color:#000;font-weight:normal;">Arivalagan Pugazhendhi, Vandana Vinayak</div>
<div class="t" style="left:1328.3px;top:808.07px;font-size:20px;line-height:20px;color:#000;font-weight:normal;">Mathimani Thangavel</div>
<div class="clip" style="left:1552px;top:798px;width:350px;height:33px;">
<div class="t" style="left:4.5px;top:10.07px;font-size:20px;line-height:20px;color:#1155cc;"><span class="u">https://pubpeer.com/publications/C2C65A</span></div>
</div>
<div class="t" style="left:-266px;width:600px;text-align:center;top:842.98px;font-size:15.5px;line-height:15.5px;color:#4a4a4a;font-weight:normal;letter-spacing:0.8px;">73</div>
<div class="r" style="left:0px;top:866px;width:67px;height:2px;background:#c4c7c5;"></div>
<div class="r" style="left:69px;top:866px;width:1833px;height:2px;background:#e1e1e1;"></div>
<div class="r" style="left:177px;top:833px;width:2px;height:35px;background:#e1e1e1;"></div>
<div class="r" style="left:693px;top:833px;width:2px;height:35px;background:#e1e1e1;"></div>
<div class="r" style="left:1322px;top:833px;width:2px;height:35px;background:#e1e1e1;"></div>
<div class="r" style="left:1550px;top:833px;width:2px;height:35px;background:#e1e1e1;"></div>
<div class="t" style="right:1746.4px;top:842.59px;font-size:20.8px;line-height:20.8px;color:#000;font-weight:normal;">71</div>
<div class="t" style="left:184px;top:841.31px;font-size:21.96px;line-height:21.96px;color:#000000;font-weight:normal;"><span class="u">https://doi.org/10.1016/j.chemosphere.2023.138498</span></div>
<div class="t" style="left:699.6px;top:843.07px;font-size:20px;line-height:20px;color:#000;font-weight:normal;">Arivalagan Pugazhendhi</div>
<div class="t" style="left:1328.3px;top:843.07px;font-size:20px;line-height:20px;color:#000;font-weight:normal;">Thamaraiselvi Kaliannan</div>
<div class="clip" style="left:1552px;top:833px;width:350px;height:33px;">
<div class="t" style="left:4.5px;top:10.07px;font-size:20px;line-height:20px;color:#1155cc;"><span class="u">https://pubpeer.com/publications/978380</span></div>
</div>
<div class="t" style="left:-266px;width:600px;text-align:center;top:877.98px;font-size:15.5px;line-height:15.5px;color:#4a4a4a;font-weight:normal;letter-spacing:0.8px;">74</div>
<div class="r" style="left:0px;top:901px;width:67px;height:2px;background:#c4c7c5;"></div>
<div class="r" style="left:69px;top:901px;width:1833px;height:2px;background:#e1e1e1;"></div>
<div class="r" style="left:177px;top:868px;width:2px;height:35px;background:#e1e1e1;"></div>
<div class="r" style="left:693px;top:868px;width:2px;height:35px;background:#e1e1e1;"></div>
<div class="r" style="left:1322px;top:868px;width:2px;height:35px;background:#e1e1e1;"></div>
<div class="r" style="left:1550px;top:868px;width:2px;height:35px;background:#e1e1e1;"></div>
<div class="t" style="right:1746.4px;top:877.59px;font-size:20.8px;line-height:20.8px;color:#000;font-weight:normal;">72</div>
<div class="t" style="left:184px;top:876.31px;font-size:21.96px;line-height:21.96px;color:#000000;font-weight:normal;"><span class="u">https://doi.org/10.1016/j.chemosphere.2021.133477</span></div>
<div class="t" style="left:699.6px;top:878.07px;font-size:20px;line-height:20px;color:#000;font-weight:normal;">Arivalagan Pugazhendhi</div>
<div class="t" style="left:1328.3px;top:878.07px;font-size:20px;line-height:20px;color:#000;font-weight:normal;">Mathimani Thangavel</div>
<div class="clip" style="left:1552px;top:868px;width:350px;height:33px;">
<div class="t" style="left:4.5px;top:10.07px;font-size:20px;line-height:20px;color:#1155cc;"><span class="u">https://pubpeer.com/publications/4EB40C</span></div>
</div>
<div class="t" style="left:-266px;width:600px;text-align:center;top:912.98px;font-size:15.5px;line-height:15.5px;color:#4a4a4a;font-weight:normal;letter-spacing:0.8px;">75</div>
<div class="r" style="left:0px;top:936px;width:67px;height:2px;background:#c4c7c5;"></div>
<div class="r" style="left:69px;top:936px;width:1833px;height:2px;background:#e1e1e1;"></div>
<div class="r" style="left:177px;top:903px;width:2px;height:35px;background:#e1e1e1;"></div>
<div class="r" style="left:693px;top:903px;width:2px;height:35px;background:#e1e1e1;"></div>
<div class="r" style="left:1322px;top:903px;width:2px;height:35px;background:#e1e1e1;"></div>
<div class="r" style="left:1550px;top:903px;width:2px;height:35px;background:#e1e1e1;"></div>
<div class="t" style="right:1746.4px;top:912.59px;font-size:20.8px;line-height:20.8px;color:#000;font-weight:normal;">73</div>
<div class="t" style="left:184px;top:911.31px;font-size:21.96px;line-height:21.96px;color:#000000;font-weight:normal;"><span class="u">https://doi.org/10.1016/j.chemosphere.2023.139738</span></div>
<div class="t" style="left:699.6px;top:913.07px;font-size:20px;line-height:20px;color:#000;font-weight:normal;">Arivalagan Pugazhendhi</div>
<div class="t" style="left:1328.3px;top:913.07px;font-size:20px;line-height:20px;color:#000;font-weight:normal;">Kuan Shiong Khoo</div>
<div class="clip" style="left:1552px;top:903px;width:350px;height:33px;">
<div class="t" style="left:4.5px;top:10.07px;font-size:20px;line-height:20px;color:#1155cc;"><span class="u">https://pubpeer.com/publications/246C2B</span></div>
</div>
<div class="t" style="left:-266px;width:600px;text-align:center;top:947.98px;font-size:15.5px;line-height:15.5px;color:#4a4a4a;font-weight:normal;letter-spacing:0.8px;">76</div>
<div class="r" style="left:0px;top:971px;width:67px;height:2px;background:#c4c7c5;"></div>
<div class="r" style="left:69px;top:971px;width:1833px;height:2px;background:#e1e1e1;"></div>
<div class="r" style="left:177px;top:938px;width:2px;height:35px;background:#e1e1e1;"></div>
<div class="r" style="left:693px;top:938px;width:2px;height:35px;background:#e1e1e1;"></div>
<div class="r" style="left:1322px;top:938px;width:2px;height:35px;background:#e1e1e1;"></div>
<div class="r" style="left:1550px;top:938px;width:2px;height:35px;background:#e1e1e1;"></div>
<div class="t" style="right:1746.4px;top:947.59px;font-size:20.8px;line-height:20.8px;color:#000;font-weight:normal;">74</div>
<div class="t" style="left:184px;top:946.31px;font-size:21.96px;line-height:21.96px;color:#000000;font-weight:normal;"><span class="u">https://doi.org/10.1016/j.chemosphere.2023.139739</span></div>
<div class="t" style="left:699.6px;top:948.07px;font-size:20px;line-height:20px;color:#000;font-weight:normal;">Arivalagan Pugazhendhi</div>
<div class="t" style="left:1328.3px;top:948.07px;font-size:20px;line-height:20px;color:#000;font-weight:normal;">Kuan Shiong Khoo</div>
<div class="clip" style="left:1552px;top:938px;width:350px;height:33px;">
<div class="t" style="left:4.5px;top:10.07px;font-size:20px;line-height:20px;color:#1155cc;"><span class="u">https://pubpeer.com/publications/7A2120</span></div>
</div>
<div class="t" style="left:-266px;width:600px;text-align:center;top:982.98px;font-size:15.5px;line-height:15.5px;color:#4a4a4a;font-weight:normal;letter-spacing:0.8px;">77</div>
<div class="r" style="left:0px;top:1006px;width:67px;height:2px;background:#c4c7c5;"></div>
<div class="r" style="left:69px;top:1006px;width:1833px;height:2px;background:#e1e1e1;"></div>
<div class="r" style="left:177px;top:973px;width:2px;height:35px;background:#e1e1e1;"></div>
<div class="r" style="left:693px;top:973px;width:2px;height:35px;background:#e1e1e1;"></div>
<div class="r" style="left:1322px;top:973px;width:2px;height:35px;background:#e1e1e1;"></div>
<div class="r" style="left:1550px;top:973px;width:2px;height:35px;background:#e1e1e1;"></div>
<div class="t" style="right:1746.4px;top:982.59px;font-size:20.8px;line-height:20.8px;color:#000;font-weight:normal;">75</div>
<div class="t" style="left:184px;top:981.31px;font-size:21.96px;line-height:21.96px;color:#000000;font-weight:normal;"><span class="u">https://doi.org/10.1016/j.chemosphere.2022.137663</span></div>
<div class="t" style="left:699.6px;top:983.07px;font-size:20px;line-height:20px;color:#000;font-weight:normal;">Arivalagan Pugazhendhi</div>
<div class="t" style="left:1328.3px;top:983.07px;font-size:20px;line-height:20px;color:#000;font-weight:normal;">Kuan Shiong Khoo</div>
<div class="clip" style="left:1552px;top:973px;width:350px;height:33px;">
<div class="t" style="left:4.5px;top:10.07px;font-size:20px;line-height:20px;color:#1155cc;"><span class="u">https://pubpeer.com/publications/23BAF0</span></div>
</div>
<div class="r" style="left:1320px;top:373px;width:234px;height:41px;background:transparent;box-sizing:border-box;border:3px solid #146c2e;"></div>
<div class="r" style="left:1323px;top:376px;width:228px;height:35px;background:transparent;box-sizing:border-box;border:1px solid #ffffff;"></div>
<div class="r" style="left:69px;top:238px;width:110px;height:35px;background:transparent;box-sizing:border-box;border:3px solid #1a73e8;"></div>
<div class="r" style="left:173px;top:266px;width:12px;height:12px;border-radius:50%;background:#0b57d0;box-shadow:0 0 0 1px #fff;"></div>
<div class="r" style="left:0px;top:1006px;width:1903px;height:1px;background:#dadce0;"></div>
<div class="r" style="left:0px;top:1007px;width:1903px;height:18px;background:#ffffff;"></div>
<div class="r" style="left:0px;top:1007px;width:68px;height:17px;background:#f8f8f8;"></div>
<div class="r" style="left:68px;top:1007px;width:2px;height:17px;background:#e1e1e1;"></div>
<div class="r" style="left:71px;top:1009px;width:581px;height:14px;background:#dadce0;border-radius:7px;"></div>
<div class="r" style="left:1856px;top:1007px;width:1px;height:16px;background:#e1e1e1;"></div>
<div class="r" style="left:1880px;top:1007px;width:1px;height:16px;background:#e1e1e1;"></div>
<div class="r" style="left:1857px;top:1007px;width:46px;height:16px;background:#f8f8f8;"></div>
<svg class="ic" style="left:1862px;top:1010px" width="12" height="12" viewBox="0 0 12 12"><path d="M8 2 L3 6 L8 10 Z" fill="#8a8a8a"/></svg>
<svg class="ic" style="left:1886px;top:1010px" width="12" height="12" viewBox="0 0 12 12"><path d="M4 2 L9 6 L4 10 Z" fill="#8a8a8a"/></svg>
<div class="r" style="left:1903px;top:124px;width:17px;height:901px;background:#ffffff;"></div>
<div class="r" style="left:1903px;top:124px;width:1px;height:901px;background:#e1e1e1;"></div>
<div class="r" style="left:1904px;top:124px;width:16px;height:114px;background:#f8f9fa;"></div>
<div class="r" style="left:1904px;top:159px;width:16px;height:2px;background:#dde1e6;"></div>
<div class="r" style="left:1905px;top:273px;width:14px;height:39px;background:#dadce0;border-radius:7px;"></div>
<div class="r" style="left:1904px;top:959px;width:16px;height:47px;background:#f8f8f8;"></div>
<div class="r" style="left:1904px;top:982px;width:16px;height:1px;background:#e1e1e1;"></div>
<svg class="ic" style="left:1906px;top:963px" width="12" height="12" viewBox="0 0 12 12"><path d="M2 8 L6 4 L10 8 Z" fill="#8a8a8a"/></svg>
<svg class="ic" style="left:1906px;top:987px" width="12" height="12" viewBox="0 0 12 12"><path d="M2 4 L6 8 L10 4 Z" fill="#8a8a8a"/></svg>
<div class="r" style="left:0px;top:1025px;width:1920px;height:1px;background:#e1e3e1;"></div>
<div class="r" style="left:0px;top:1026px;width:1920px;height:54px;background:#f9fbfd;"></div>
<svg class="ic" style="left:83px;top:1045px" width="17" height="17" viewBox="0 0 17 17"><path d="M8.5 0 V17 M0 8.5 H17" stroke="#444746" stroke-width="2.2"/></svg>
<svg class="ic" style="left:140px;top:1045px" width="22" height="16" viewBox="0 0 22 16"><path d="M0 2 H21 M0 8 H21 M0 14 H21" stroke="#444746" stroke-width="2.2"/></svg>
<div class="r" style="left:198px;top:1026px;width:135px;height:54px;background:#e1e9f7;"></div>
<div class="t" style="left:216.3px;top:1042.68px;font-size:22px;line-height:22px;color:#0b57d0;font-weight:normal;letter-spacing:0.3px;-webkit-text-stroke:0.6px #0b57d0;">Sheet1</div>
<svg class="ic" style="left:303.4px;top:1050.8px" width="11.6" height="6.2" viewBox="0 0 11.6 6.2"><path d="M0 0 H11.6 L5.8 6.2 Z" fill="#0b57d0"/></svg>
<div class="r" style="left:1352px;top:80px;width:502px;height:102.5px;background:#fff;border-radius:0 0 12px 10px;box-sizing:border-box;border:1px solid #d5d8dc;border-top:0;box-shadow:0 1px 2px rgba(60,64,67,.12);clip-path:inset(0 -20px -20px -20px);"></div>
<div class="r" style="left:1371px;top:112px;width:255px;height:54px;box-sizing:border-box;border:1px solid #dadce0;border-radius:7px;"></div>
<div class="t" style="left:1384px;top:130.01px;font-size:19.6px;line-height:19.6px;color:#1f1f1f;font-weight:normal;">mu. naushad</div>
<div class="t" style="left:1535px;top:129.25px;font-size:20.5px;line-height:20.5px;color:#5f6368;font-weight:normal;letter-spacing:0.3px;">1 of 12</div>
<svg class="ic" style="left:1648px;top:128px" width="16" height="10" viewBox="0 0 16 10"><path d="M1.5 8.5 L8 2 L14.5 8.5" fill="none" stroke="#444746" stroke-width="2.2"/></svg>
<svg class="ic" style="left:1698px;top:129px" width="16" height="10" viewBox="0 0 16 10"><path d="M1.5 1.5 L8 8 L14.5 1.5" fill="none" stroke="#444746" stroke-width="2.2"/></svg>
<div class="r" style="left:1744px;top:117px;width:1px;height:36px;background:#dadce0;"></div>
<svg class="ic" style="left:1767px;top:122px" width="9" height="24" viewBox="0 0 9 24"><circle cx="4.5" cy="5" r="2.3" fill="#444746"/><circle cx="4.5" cy="12.4" r="2.3" fill="#444746"/><circle cx="4.5" cy="19.9" r="2.3" fill="#444746"/></svg>
<svg class="ic" style="left:1810px;top:128px" width="17" height="17" viewBox="0 0 17 17"><path d="M1.5 1.5 L15.5 15.5 M15.5 1.5 L1.5 15.5" stroke="#444746" stroke-width="2.2"/></svg>
</body></html>
